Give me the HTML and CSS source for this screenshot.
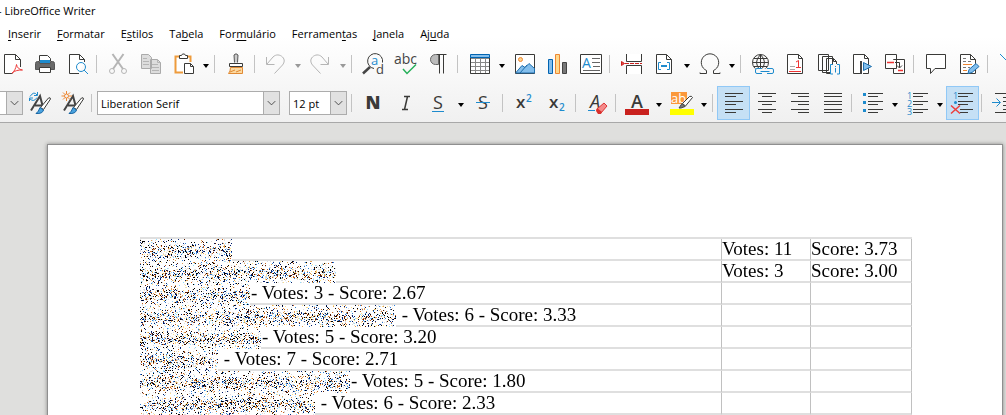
FILE: index.html
```
<!DOCTYPE html>
<html lang="pt">
<head>
    <meta charset="UTF-8">
    <meta name="viewport" content="width=device-width, initial-scale=1.0">
    <title>LibreOffice Writer</title>
    <link rel="stylesheet" href="styles.css">
</head>

<body>
    <header class="chrome">
        <div class="titlebar">- LibreOffice Writer</div>

        <nav class="menubar">
            <button type="button"><u>I</u>nserir</button>
            <button type="button"><u>F</u>ormatar</button>
            <button type="button">E<u>s</u>tilos</button>
            <button type="button">Ta<u>b</u>ela</button>
            <button type="button">For<u>m</u>ulário</button>
            <button type="button">Ferramen<u>t</u>as</button>
            <button type="button"><u>J</u>anela</button>
            <button type="button">Aj<u>u</u>da</button>
        </nav>

        <!-- Standard toolbar -->
        <div class="toolbar standard">
            <div class="group">
                <button type="button" class="tool" aria-label="Exportar PDF"><svg viewBox="0 0 24 24"><path class="page" d="M12.500 21.500H4.500V2.500H15.500L20.500 7.500V15"/><path class="ink" d="M15.500 2.500v5h5"/><path class="red" d="M12 21.500c2-2 4-5 4.500-9M16.500 12.500c.5 3 2.500 5 6 5.500M12 21c3-2.500 6-3 10.500-3"/></svg></button>
                <button type="button" class="tool" aria-label="Imprimir"><svg viewBox="0 0 24 24"><path class="page" d="M6.500 9V3.500H14.500L17.500 6.500V9"/><path fill="#1e8bcd" d="M7 8h10v3H7z"/><path fill="#696969" stroke="#555" d="M4.500 9.500h2v2h11v-2h2q2 0 2 2v6h-19v-6q0-2 2-2z"/><path class="page" d="M6.500 15.500h11v5h-11z"/></svg></button>
                <button type="button" class="tool" aria-label="Visualizar impressão"><svg viewBox="0 0 24 24"><path class="page" d="M13 21.500H3.500V2.500H13.500L18.500 7.500V10"/><path class="ink" d="M13.500 2.500v5h5"/><circle class="blue" cx="15" cy="15" r="4.500"/><path class="blue" d="M18 18l4 4"/></svg></button>
                <span class="sep"></span>
                <button type="button" class="tool" aria-label="Cortar"><svg viewBox="0 0 24 24"><path class="grey" stroke-width="2" d="M6.500 2l10.500 15M17.500 2L7 17"/><circle class="grey" cx="6" cy="19" r="2.500"/><circle class="grey" cx="18" cy="19" r="2.500"/></svg></button>
                <button type="button" class="tool" aria-label="Copiar"><svg viewBox="0 0 24 24"><path fill="#ddd" stroke="#aaa" d="M2.500 2.500h7l3 3v11h-10zM11.500 7.500h7l3 3v11h-10z"/><path class="grey" d="M4 6.500h4M4 9.500h6M4 12.500h6M18.500 7.500v3h3M13 12.500h6M13 15.500h7M13 18.500h7"/></svg></button>
                <button type="button" class="tool" aria-label="Colar"><svg viewBox="0 0 24 24"><path d="M4 5h15v4h-6v12H4z" fill="#fff"/><path fill="none" stroke="#ee9b3c" stroke-width="2" d="M8 4.500H3.500V20.500H11M15 4.500h3.500V10"/><path class="page" d="M7.500 6.500v-3h2l1-1.500h2l1 1.500h2v3zM12.500 11.500H18.500L21.500 14.500V21.500H12.500z"/><path class="ink" d="M18.500 11.500v3h3"/></svg></button>
                <button type="button" class="more" aria-label="Mais"></button>
                <span class="sep"></span>
                <button type="button" class="tool" aria-label="Clonar formatação"><svg viewBox="0 0 24 24"><path fill="#ccc" stroke="#555" d="M10.500 10.500L10 3q2-2.500 4 0l-.5 7.500"/><path class="page" d="M5.500 14.500v-3h13v3z"/><path fill="#fcd9a0" stroke="#e08a35" d="M6.500 15.500h12v6h-14q2-2 2-6zM6 20l5-2M12 20l5-2"/></svg></button>
                <span class="sep"></span>
                <button type="button" class="tool" aria-label="Desfazer"><svg viewBox="0 0 24 24"><path class="grey" d="M2.500 5v7.500h8M3 12L9 5c3-3 7-2.500 9.500 0s2 5.500 0 8l-8 8.500"/></svg></button>
                <button type="button" class="more off" aria-label="Mais"></button>
                <button type="button" class="tool" aria-label="Refazer"><svg viewBox="0 0 24 24"><path class="grey" d="M19.500 5v7.500h-8M19 12L13 5C10 2 6 2.500 3.500 5s-2 5.500 0 8l8 8.500"/></svg></button>
                <button type="button" class="more off" aria-label="Mais"></button>
                <span class="sep"></span>
                <button type="button" class="tool" aria-label="Localizar"><svg viewBox="0 0 24 24"><path d="M9 15L2 21.500" stroke="#444" stroke-width="2.500"/><path class="ink" d="M13 16.500a7.500 7.500 0 1 1 8.500-6"/><text x="10" y="13" font-size="13" fill="#1e8bcd">a</text><text x="15" y="22" font-size="13" fill="#444">d</text></svg></button>
                <button type="button" class="tool" aria-label="Ortografia"><svg viewBox="0 0 24 24"><text x="0" y="12" font-size="14" fill="#444">abc</text><path fill="none" stroke="#26b05a" stroke-width="1.500" d="M9 17l4 4.500 9-9"/></svg></button>
                <button type="button" class="tool" aria-label="Marcas de formatação"><svg viewBox="0 0 24 24"><path fill="#bbb" stroke="#666" d="M11.500 2.500h-3a4.500 4.500 0 0 0 0 10h3z"/><path class="ink" d="M10 2.500h9.500M12.500 3v18.500M16.500 3v18.500"/></svg></button>
            </div>
            <div class="group insert">
                <span class="sep"></span>
                <button type="button" class="tool" aria-label="Inserir tabela"><svg viewBox="0 0 24 24"><path fill="#fff" stroke="#888" d="M2.500 6.500h19v15h-19zM2.500 10.500h19M2.500 14.500h19M2.500 18.500h19M7.500 6v15M12.500 6v15M17.500 6v15"/><path class="ink" d="M2.500 5.500h19v16h-19z"/><path fill="#83beec" stroke="#0063b1" d="M2.500 2.500h19v3h-19z"/></svg></button>
                <button type="button" class="more" aria-label="Mais"></button>
                <button type="button" class="tool" aria-label="Inserir imagem"><svg viewBox="0 0 24 24"><path class="page" d="M2.500 2.500h19v19h-19z"/><circle cx="7.500" cy="7.500" r="2" fill="#fbd38d" stroke="#ed8733"/><path fill="#83beec" stroke="#1e6fae" d="M3 20.500l6-7 3 2 4-4 5.500 5V21H3zM7 21l7-8"/></svg></button>
                <button type="button" class="tool" aria-label="Inserir gráfico"><svg viewBox="0 0 24 24"><path fill="#83beec" stroke="#0063b1" d="M2.500 7.500h4v14h-4z"/><path fill="#ffd98c" stroke="#ed8733" d="M9.500 2.500h4v19h-4z"/><path fill="#777" stroke="#444" d="M16.500 10.500h4v11h-4z"/></svg></button>
                <button type="button" class="tool" aria-label="Caixa de texto"><svg viewBox="0 0 24 24"><path class="page" d="M1.500 2.500h21v19h-21z"/><text x="3" y="16" font-size="14" fill="#1e8bcd">A</text><path stroke="#666" d="M13 6.500h8M13 10.500h8M14 14.500h7M4 18.500h17"/></svg></button>
                <span class="sep"></span>
                <button type="button" class="tool" aria-label="Quebra de página"><svg viewBox="0 0 24 24"><path class="page" d="M6.500 2v7.500h15V2M6.500 22v-8.500h15V22"/><path fill="none" stroke="#c9211e" stroke-dasharray="4 1" d="M5 11.500h17"/><path fill="#e84b4b" stroke="#c9211e" d="M1.500 9.500v4l3-2z"/></svg></button>
                <button type="button" class="tool" aria-label="Inserir campo"><svg viewBox="0 0 24 24"><path class="page" d="M3.500 2.500H13.500L18.500 7.500V21.500H3.500z"/><path class="ink" d="M13.500 2.500v5h5"/><path class="blue" d="M8 10.500H5.500v7H8M14 10.500h2.500v7H14"/><path stroke="#1e8bcd" stroke-width="2" d="M8 14h6"/></svg></button>
                <button type="button" class="more" aria-label="Mais"></button>
                <button type="button" class="tool" aria-label="Caractere especial"><svg viewBox="0 0 24 24"><path class="ink" d="M2 20.500v1h6.500v-3A8.700 8.700 0 1 1 15.500 18.500v3H22v-1"/></svg></button>
                <button type="button" class="more" aria-label="Mais"></button>
                <span class="sep"></span>
                <button type="button" class="tool" aria-label="Hiperlink"><svg viewBox="0 0 24 24"><circle class="ink" cx="9.500" cy="10.500" r="8"/><path class="ink" d="M1.500 10.500h16M3 6.500h13M3 14.500h13M9.500 2.500v16M9.500 2.500q-8 8 0 16M9.500 2.500q8 8 0 16"/><path fill="none" stroke="#f7f7f7" stroke-width="5" d="M4 19h19"/><path class="blue" d="M11 16.500H6q-1.500 0-1.500 1.500v2q0 1.500 1.500 1.500h5M16 16.500h5q1.500 0 1.500 1.500v2q0 1.500-1.500 1.500h-5M9.500 19.500h9"/></svg></button>
                <button type="button" class="tool" aria-label="Nota de rodapé"><svg viewBox="0 0 24 24"><path class="page" d="M3.500 2.500H14.500L18.500 6.500V21.500H3.500z"/><path class="ink" d="M14.500 2.500v4h4"/><path stroke="#aaa" d="M6 14.500h5M6 17.500h5"/><path fill="none" stroke="#e33" d="M5 19.500h12M12 10l2.500-1.500v7M12 15.500h5"/></svg></button>
                <button type="button" class="tool" aria-label="Nota de fim"><svg viewBox="0 0 24 24"><path class="page" d="M1.500 2.500h10v16h-10zM5.500 4.500h10v16h-10zM9.500 6.500h7l3 3v12h-10z"/><path class="ink" d="M16.500 6.500v3h3"/><path fill="#f8f8f8" d="M13 12h11v11H13z"/><path class="blue" d="M16 12.500h-2.500v9.500H16M20 12.500h2.500v9.500H20M18.500 14v1M18.500 16v4.500"/></svg></button>
                <button type="button" class="tool" aria-label="Marcador"><svg viewBox="0 0 24 24"><path class="page" d="M10 21.500H3.500V2.500H14.500L18.500 6.500V21.500H13"/><path class="ink" d="M14.500 2.500v4h4"/><path fill="#444" d="M10 9h2v13h-2z"/><path fill="#83beec" stroke="#1e6fae" d="M13.500 10.500v8l8-4z"/></svg></button>
                <button type="button" class="tool" aria-label="Referência cruzada"><svg viewBox="0 0 24 24"><path class="page" d="M2.500 2.500h11v14h-11zM10.500 7.500h11v14h-11z"/><path fill="#fff" d="M8 8h5v8H8z"/><path stroke="#e33" stroke-width="1.500" d="M4 10.500h7M15 18.500h5"/><path class="ink" d="M12 10.500h4.500v5M14 13.500l2.500 2.500 2.500-2.500"/></svg></button>
                <span class="sep"></span>
                <button type="button" class="tool" aria-label="Comentário"><svg viewBox="0 0 24 24"><path class="page" d="M2.500 2.500h19v14H11L6.500 21.500v-5h-4z"/></svg></button>
                <button type="button" class="tool" aria-label="Controlar alterações"><svg viewBox="0 0 24 24"><path class="page" d="M3.500 2.500H13.500L18.500 7.500V21.500H3.500z"/><path class="ink" d="M13.500 2.500v5h5"/><path stroke="#777" stroke-dasharray="3 2" d="M6 6.500h5M6 9.500h10M6 15.500h7"/><path stroke="#ed8733" d="M6 12.500h9M6 18.500h4"/><path fill="#83beec" stroke="#1e6fae" d="M11 21.500l1-4 7-6 3 3-7 6z"/></svg></button>
                <span class="sep"></span>
                <button type="button" class="tool" aria-label="Inserir linha"><svg viewBox="0 0 24 24"><path class="blue" d="M2 2l20 20"/></svg></button>
            </div>
        </div>

        <!-- Formatting toolbar -->
        <div class="toolbar formatting">
            <span class="combo combo-style">
                <select aria-label="Estilo de parágrafo"><option></option></select>
                <svg viewBox="0 0 16 22"><path d="M4 9l4 4 4-4"/></svg>
            </span>
            <button type="button" class="tool" aria-label="Atualizar estilo"><svg viewBox="0 0 24 24"><path fill="none" stroke="#444" stroke-width="2" d="M3 19.500L12 5l3.500 13M7 14.500h7"/><path class="blue" d="M2 5.500q4-6 7-1.500M9.500 1v3.500H6M9 6.500q-3 5-7 1.500M1.500 10V7H5"/><path class="page" d="M12.500 16.500l8-9.500q2-1 2 1l-7 10.500z"/><path fill="#4aa3df" stroke="#1765a3" d="M12 16.500l3.500 2.500q-1 4-7.500 3.500 2.500-1.500 4-6z"/></svg></button>
            <button type="button" class="tool" aria-label="Novo estilo"><svg viewBox="0 0 24 24"><path fill="none" stroke="#444" stroke-width="2" d="M3 19.500L12 5l3.500 13M7 14.500h7"/><path class="orange" d="M5.500 0v3M5.500 7v3M.5 5h3M8 5h3M2 1.500l2 2M9 1.500l-2 2M2 8.500l2-2M9 8.500l-2-2"/><circle class="orange" cx="5.500" cy="5" r="2"/><path class="page" d="M12.500 16.500l8-9.500q2-1 2 1l-7 10.500z"/><path fill="#4aa3df" stroke="#1765a3" d="M12 16.500l3.500 2.500q-1 4-7.500 3.500 2.500-1.500 4-6z"/></svg></button>
            <span class="sep"></span>
            <span class="combo combo-font">
                <select aria-label="Nome da fonte"><option>Liberation Serif</option></select>
                <svg viewBox="0 0 16 22"><path d="M4 9l4 4 4-4"/></svg>
            </span>
            <span class="combo combo-size">
                <select aria-label="Tamanho da fonte"><option>12 pt</option></select>
                <svg viewBox="0 0 16 22"><path d="M4 9l4 4 4-4"/></svg>
            </span>
            <span class="sep"></span>
            <button type="button" class="tool" aria-label="Negrito"><svg viewBox="0 0 24 24"><text x="12" y="18" font-size="18" font-weight="800" text-anchor="middle" fill="#3a3a38">N</text></svg></button>
            <button type="button" class="tool" aria-label="Itálico"><svg viewBox="0 0 24 24"><path class="ink" d="M10 5.500h6M8 18.500h6M13.500 5.500l-3 13" stroke-width="1.500"/></svg></button>
            <button type="button" class="tool" aria-label="Sublinhado"><svg viewBox="0 0 24 24"><text x="11" y="18" font-size="18" text-anchor="middle" fill="#3a3a38">S</text><path class="blue" d="M5 20.500h12"/></svg></button>
            <button type="button" class="more" aria-label="Mais"></button>
            <button type="button" class="tool" aria-label="Tachado"><svg viewBox="0 0 24 24"><text x="11" y="18" font-size="18" text-anchor="middle" fill="#3a3a38">S</text><path class="blue" d="M4 11.500h14"/></svg></button>
            <span class="sep"></span>
            <button type="button" class="tool" aria-label="Sobrescrito"><svg viewBox="0 0 24 24"><text x="4" y="17" font-size="17" font-weight="600" fill="#3a3a38">x</text><text x="14" y="11" font-size="10" font-weight="600" fill="#1e8bcd">2</text></svg></button>
            <button type="button" class="tool" aria-label="Subscrito"><svg viewBox="0 0 24 24"><text x="4" y="17" font-size="17" font-weight="600" fill="#3a3a38">x</text><text x="14" y="20" font-size="10" font-weight="600" fill="#1e8bcd">2</text></svg></button>
            <span class="sep"></span>
            <button type="button" class="tool" aria-label="Limpar formatação"><svg viewBox="0 0 24 24"><text x="5" y="17" font-size="18" font-style="italic" fill="#3a3a38">A</text><path class="blue" d="M3 19.500h7"/><path fill="#f48a8a" stroke="#d33" d="M12 18l7-6 3 3-6 7h-2l-2-2z"/><path fill="#d9302c" d="M12 17l5 4-1 2h-3l-2-3z"/></svg></button>
            <span class="sep"></span>
            <button type="button" class="tool" aria-label="Cor da fonte"><svg viewBox="0 0 24 24"><text x="12" y="17" font-size="18" font-weight="600" text-anchor="middle" fill="#3a3a38">A</text><path fill="#c9211e" d="M0 18h24v6H0z"/></svg></button>
            <button type="button" class="more" aria-label="Mais"></button>
            <button type="button" class="tool" aria-label="Realce"><svg viewBox="0 0 24 24"><path fill="#fb983b" d="M1 1h16v12H1z"/><text x="1" y="12" font-size="13" fill="#fff">ab</text><path class="page" d="M12.500 12.500l7-7q2-1 3 1l-7 8.500z"/><path fill="#777" stroke="#444" d="M12 12.500l3 3-4 1.500H9z"/><path fill="#ff0" d="M0 18h24v6H0z"/></svg></button>
            <button type="button" class="more" aria-label="Mais"></button>
            <span class="sep"></span>
            <button type="button" class="tool active" aria-label="Alinhar à esquerda"><svg viewBox="0 0 24 24"><path class="ink" d="M3 2.500h18M3 5.500h11M3 10.500h18M3 13.500h11M3 18.500h18M3 21.500h11"/></svg></button>
            <button type="button" class="tool" aria-label="Centralizar"><svg viewBox="0 0 24 24"><path class="ink" d="M3 2.500h18M7 5.500h10M3 10.500h18M7 13.500h10M3 18.500h18M7 21.500h10"/></svg></button>
            <button type="button" class="tool" aria-label="Alinhar à direita"><svg viewBox="0 0 24 24"><path class="ink" d="M3 2.500h18M10 5.500h11M3 10.500h18M10 13.500h11M3 18.500h18M10 21.500h11"/></svg></button>
            <button type="button" class="tool" aria-label="Justificar"><svg viewBox="0 0 24 24"><path class="ink" d="M3 2.500h18M3 5.500h18M3 10.500h18M3 13.500h18M3 18.500h18M3 21.500h18"/></svg></button>
            <span class="sep"></span>
            <button type="button" class="tool" aria-label="Marcadores"><svg viewBox="0 0 24 24"><path class="ink" d="M7 2.500h15M7 5.500h10M7 10.500h15M7 13.500h10M7 18.500h15M7 21.500h10"/><path fill="#1e8bcd" d="M2 2h3v3H2zM2 10h3v3H2zM2 18h3v3H2z"/></svg></button>
            <button type="button" class="more" aria-label="Mais"></button>
            <button type="button" class="tool" aria-label="Numeração"><svg viewBox="0 0 24 24"><path class="ink" d="M7 2.500h15M7 5.500h10M7 10.500h15M7 13.500h10M7 18.500h15M7 21.500h10"/><g font-size="9" fill="#1e8bcd"><text x="1" y="8">1</text><text x="1" y="16">2</text><text x="1" y="24">3</text></g></svg></button>
            <button type="button" class="more" aria-label="Mais"></button>
            <button type="button" class="tool active" aria-label="Sem lista"><svg viewBox="0 0 24 24"><path class="ink" d="M7 2.500h15M7 5.500h10M7 10.500h15M7 13.500h10M9 18.500h13M9 21.500h8"/><text x="2" y="8" font-size="9" fill="#1e8bcd">1</text><circle cx="4.500" cy="11.500" r="1.500" fill="#1e8bcd"/><path class="red" stroke-width="1.500" d="M0 14.500l9 8M9 14.500l-9 8"/></svg></button>
            <span class="sep"></span>
            <button type="button" class="tool" aria-label="Aumentar recuo"><svg viewBox="0 0 24 24"><path class="ink" d="M4 2.500h18M12 6.500h10M12 10.500h10M12 14.500h10M12 18.500h10M4 21.500h18"/><path class="blue" d="M1 11.500h8M5.500 7.500l4 4-4 4"/></svg></button>
        </div>
    </header>

    <main class="workspace">
        <article class="paper">
            <table class="scores">
                <colgroup><col><col class="votes"><col class="score"></colgroup>
                <tbody>
                    <tr><td><canvas width="92" height="22"></canvas></td><td>Votes: 11</td><td>Score: 3.73</td></tr>
                    <tr><td><canvas width="196" height="22"></canvas></td><td>Votes: 3</td><td>Score: 3.00</td></tr>
                    <tr><td><canvas width="110" height="22"></canvas>- Votes: 3 - Score: 2.67</td><td></td><td></td></tr>
                    <tr><td><canvas width="256" height="22"></canvas> - Votes: 6 - Score: 3.33</td><td></td><td></td></tr>
                    <tr><td><canvas width="121" height="22"></canvas>- Votes: 5 - Score: 3.20</td><td></td><td></td></tr>
                    <tr><td><canvas width="78" height="22"></canvas> - Votes: 7 - Score: 2.71</td><td></td><td></td></tr>
                    <tr><td><canvas width="210" height="22"></canvas>- Votes: 5 - Score: 1.80</td><td></td><td></td></tr>
                    <tr><td><canvas width="175" height="22"></canvas> - Votes: 6 - Score: 2.33</td><td></td><td></td></tr>
                    <tr><td></td><td></td><td></td></tr>
                </tbody>
            </table>
        </article>
    </main>

    <script src="noise.js"></script>
</body>
</html>
```

FILE: styles.css
```
* {
    box-sizing: border-box;
}

body {
    margin: 0;
    height: 100vh;
    overflow: hidden;
    display: flex;
    flex-direction: column;
    font-family: "Open Sans", "Noto Sans", sans-serif;
    font-size: 11px;
    color: #000;
    background: #dfdfdd;
}

button {
    margin: 0;
    padding: 0;
    border: none;
    background: none;
    color: inherit;
    font: inherit;
}

.chrome {
    flex: none;
    padding-bottom: 2px;
    overflow: hidden;
    background: linear-gradient(#fff 30%, #f0f0f0);
    border-bottom: 1px solid #a8a8a8;
}

.titlebar {
    margin-left: -2px;
    padding-top: 1px;
    line-height: 20px;
    white-space: nowrap;
}

.menubar {
    display: flex;
    gap: 16px;
    height: 26px;
    padding-left: 8px;
    line-height: 26px;
}

.menubar u {
    text-underline-offset: 2px;
}

/* toolbars */
.toolbar,
.group {
    display: flex;
    align-items: center;
}

.toolbar {
    height: 34px;
}

.standard {
    margin-left: -5px;
    margin-bottom: 5px;
}

.formatting {
    margin-left: -80px;
}

.tool {
    flex: none;
    display: flex;
    align-items: center;
    justify-content: center;
    width: 33px;
    height: 34px;
}

.tool svg {
    width: 24px;
    height: 24px;
    overflow: visible;
}

.tool.active {
    background: #c5e0f5;
    border: 1px solid #90c8f6;
}

.more {
    flex: none;
    width: 12px;
    height: 34px;
    padding-top: 4px;
}

.more::before {
    content: "";
    display: block;
    margin: 0 auto;
    width: 0;
    border: 3px solid transparent;
    border-top: 4px solid #000;
    border-bottom: 0;
}

.more.off::before {
    border-top-color: #999;
}

.sep {
    flex: none;
    width: 7px;
    height: 18px;
    border-left: 1px solid #c3c3c3;
    margin-left: 2px;
    margin-right: -2px;
}

.insert .sep {
    width: 8px;
}

.page {
    fill: #fff;
    stroke: #3a3a38;
}

.ink {
    fill: none;
    stroke: #3a3a38;
}

.grey {
    fill: none;
    stroke: #b5b5b5;
}

.blue {
    fill: none;
    stroke: #1e8bcd;
}

.red {
    fill: none;
    stroke: #ed3d3b;
}

.orange {
    fill: none;
    stroke: #ed8733;
}

/* drop-downs */
.combo {
    flex: none;
    position: relative;
    height: 24px;
}

.combo select {
    width: 100%;
    height: 24px;
    padding: 0 20px 0 3px;
    border: 1px solid #acacac;
    border-radius: 0;
    appearance: none;
    background: #fff;
    color: #000;
    font: inherit;
}

.combo svg {
    position: absolute;
    top: 1px;
    right: 1px;
    width: 16px;
    height: 22px;
    background: #e1e1e1;
    border-left: 1px solid #acacac;
    fill: none;
    stroke: #444;
    pointer-events: none;
}

.combo-style {
    width: 103px;
}

.combo-font {
    width: 183px;
    margin-left: 1px;
}

.combo-size {
    width: 58px;
    margin: 0 2px 0 9px;
}

/* document */
.workspace {
    flex: 1;
    min-height: 0;
    overflow: hidden;
    padding: 21px 3px 0 47px;
}

.paper {
    min-height: 100%;
    padding: 92px 90px 0 92px;
    background: #fff;
    border: 1px solid #8f8f8f;
    box-shadow: 0 0 4px rgba(0, 0, 0, 0.4);
}

.scores {
    width: 100%;
    table-layout: fixed;
    border-spacing: 0;
    border-top: 2px solid #dfdfdf;
    font-family: "Liberation Serif", serif;
    font-size: 19px;
    line-height: 20px;
}

.scores .votes {
    width: 89px;
}

.scores .score {
    width: 101px;
}

.scores td {
    height: 22px;
    padding: 0;
    border-right: 1px solid #c0c0c0;
    border-bottom: 2px solid #dfdfdf;
    white-space: nowrap;
}

.scores canvas {
    vertical-align: top;
    margin-right: 1px;
    margin-bottom: -2px;
}
```

FILE: noise.js
```
// covers the names with speckles, denser around the middle of the line
const colors = ['#000', '#000', '#001a66', '#0a2a7a', '#5a1a00', '#c8641e',
    '#e0a050', '#2f7fd6', '#8fdcff', '#ddd', '#ddd', '#ddd', '#ffe08a'];
let seed = 7;

function random() {
    seed = (seed * 16807) % 2147483647;
    return seed / 2147483647;
}

document.querySelectorAll('.scores canvas').forEach(canvas => {
    const ctx = canvas.getContext('2d');
    ctx.fillStyle = '#fff';
    ctx.fillRect(0, 0, canvas.width, canvas.height);

    for (let y = 0; y < canvas.height; y++) {
        const density = 0.16 + 0.28 * Math.exp(-Math.pow((y - 12) / 5, 2));
        for (let x = 0; x < canvas.width; x++) {
            if (random() < density) {
                ctx.fillStyle = colors[Math.floor(random() * colors.length)];
                ctx.fillRect(x, y, 1, 1);
            }
        }
    }
});
```
